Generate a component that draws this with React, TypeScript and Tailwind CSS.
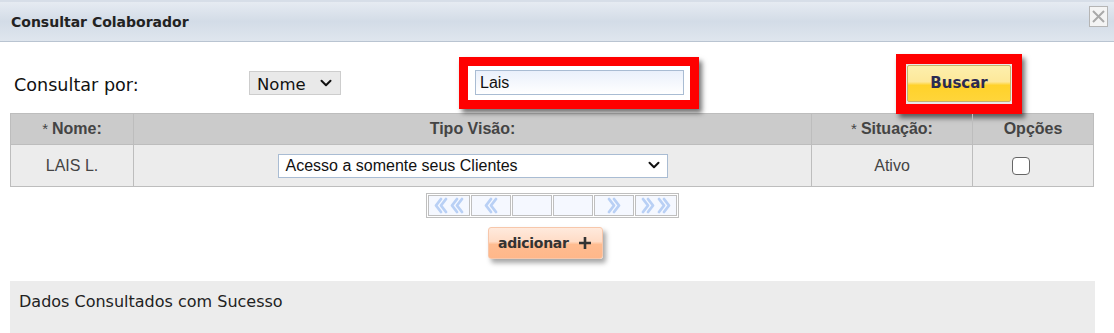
import React from "react";

const DChevL = () => (
  <svg width="14" height="17" viewBox="0 0 14 17" fill="none" stroke="#b9d0f5" strokeWidth="2.8" strokeLinecap="round" strokeLinejoin="round">
    <path d="M7 2 L2 8.5 L7 15" />
    <path d="M12 2 L7 8.5 L12 15" />
  </svg>
);
const DChevR = () => (
  <svg width="14" height="17" viewBox="0 0 14 17" fill="none" stroke="#b9d0f5" strokeWidth="2.8" strokeLinecap="round" strokeLinejoin="round">
    <path d="M2 2 L7 8.5 L2 15" />
    <path d="M7 2 L12 8.5 L7 15" />
  </svg>
);

const Chevron = ({ size = 12 }: { size?: number }) => (
  <svg width={size} height={size * 0.7} viewBox="0 0 12 8" fill="none" stroke="#111" strokeWidth="2" strokeLinecap="round" strokeLinejoin="round">
    <path d="M1.5 1.5 L6 6 L10.5 1.5" />
  </svg>
);

export default function App() {
  return (
    <div className="w-[1114px] h-[333px] bg-white overflow-hidden relative" style={{ fontFamily: "Arial, 'Liberation Sans', sans-serif" }}>
      {/* title bar */}
      <div className="h-[42px] border-t-[2px] border-t-[#d7dee8] border-b border-b-[#b9c4d1] bg-gradient-to-b from-[#e6ebf2] via-[#d3dce7] to-[#dfe6ee] flex items-center justify-between pl-[11px] pr-[6px]">
        <span className="mt-[2px] text-[14px] font-bold text-[#222] font-['DejaVu_Sans',sans-serif]">Consultar Colaborador</span>
        <div className="w-[19px] h-[21px] border border-[#b5b5b5] bg-[#f4f4f4] flex items-center justify-center -mt-[10px]">
          <svg width="15" height="15" viewBox="0 0 15 15" stroke="#a9a9a9" strokeWidth="2">
            <path d="M2 2 L13 13 M13 2 L2 13" />
          </svg>
        </div>
      </div>

      {/* search row */}
      <div className="h-[71px] pt-[12px] flex items-center">
        <span className="ml-[14px] mt-[3px] w-[235px] text-[17.6px] text-[#111] font-['DejaVu_Sans',sans-serif]">Consultar por:</span>
        <div className="w-[92px] h-[24px] bg-[#e9e9e9] border border-[#cdcdcd] flex items-center justify-between pl-[7px] pr-[8px] -mt-[1px]">
          <span className="text-[16.5px] text-[#111] font-['DejaVu_Sans',sans-serif] leading-none mt-[4px]">Nome</span>
          <Chevron size={12} />
        </div>
        <div className="ml-[118px] w-[240px] h-[52px] border-[9px] border-[#ff0000] shadow-[3px_4px_5px_rgba(0,0,0,0.55)] flex items-center pl-[7px] mt-[-2px]">
          <div className="w-[209px] h-[25px] border border-[#a9bcd3] bg-gradient-to-b from-[#eaf0fb] to-[#ffffff] flex items-center pl-[4px]">
            <span className="text-[16px] text-[#111]">Lais</span>
          </div>
        </div>
        <div className="ml-[197px] w-[126px] h-[60px] border-[10px] border-[#ff0000] shadow-[3px_4px_5px_rgba(0,0,0,0.55)] flex items-center bg-[#e8e8e8] p-[1px]">
          <div className="w-full h-[37px] rounded-[2px] border border-[#c8b26a] bg-[linear-gradient(to_bottom,#fdefad_0%,#fde89a_45%,#ffd22a_55%,#ffd53a_100%)] flex items-center justify-center">
            <span className="text-[15px] font-bold text-[#2b2b52] font-['DejaVu_Sans',sans-serif]">Buscar</span>
          </div>
        </div>
      </div>

      {/* table */}
      <div className="ml-[10px] w-[1084px] border border-[#bdbdbd]">
        <div className="flex h-[31px] bg-[#cbcbcb] border-b border-[#bdbdbd] text-[16px] text-[#444]">
          <div className="w-[123px] border-r border-[#bdbdbd] flex items-center justify-center"><span className="font-normal text-[15px] mr-[4px]">*</span><b>Nome:</b></div>
          <div className="w-[678px] border-r border-[#bdbdbd] flex items-center justify-center"><b>Tipo Visão:</b></div>
          <div className="w-[161px] border-r border-[#bdbdbd] flex items-center justify-center"><span className="font-normal text-[15px] mr-[4px]">*</span><b>Situação:</b></div>
          <div className="flex-1 flex items-center justify-center"><b>Opções</b></div>
        </div>
        <div className="flex h-[41px] bg-[#ececec] text-[16px] text-[#444]">
          <div className="w-[123px] border-r border-[#bdbdbd] flex items-center justify-center">LAIS L.</div>
          <div className="w-[678px] border-r border-[#bdbdbd] flex items-center justify-center">
            <div className="w-[390px] h-[24px] border border-[#a9bcd3] bg-white flex items-center justify-between pl-[7px] pr-[7px]">
              <span className="text-[16px] text-[#111]">Acesso a somente seus Clientes</span>
              <Chevron size={12} />
            </div>
          </div>
          <div className="w-[161px] border-r border-[#bdbdbd] flex items-center justify-center">Ativo</div>
          <div className="flex-1 flex items-center justify-center">
            <div className="ml-[-24px] w-[18px] h-[18px] rounded-[4px] border-[1.5px] border-[#666] bg-white" />
          </div>
        </div>
      </div>

      {/* pagination */}
      <div className="flex justify-center mt-[6px]">
        <div className="ml-[-10px] flex border border-[#bfbfbf] p-[1px] gap-[1px]">
          <div className="w-[42px] h-[21px] border border-[#bfbfbf] bg-[#f5f8ff] flex items-center justify-center gap-[2px]"><DChevL /><DChevL /></div>
          <div className="w-[40px] h-[21px] border border-[#bfbfbf] bg-[#f5f8ff] flex items-center justify-center"><DChevL /></div>
          <div className="w-[40px] h-[21px] border border-[#bfbfbf] bg-[#f5f8ff]" />
          <div className="w-[40px] h-[21px] border border-[#bfbfbf] bg-[#f5f8ff]" />
          <div className="w-[40px] h-[21px] border border-[#bfbfbf] bg-[#f5f8ff] flex items-center justify-center"><DChevR /></div>
          <div className="w-[42px] h-[21px] border border-[#bfbfbf] bg-[#f5f8ff] flex items-center justify-center gap-[2px]"><DChevR /><DChevR /></div>
        </div>
      </div>

      {/* adicionar */}
      <div className="flex justify-center mt-[9px]">
        <div className="ml-[-23px] w-[115px] h-[32px] rounded-[3px] border border-[#f7c7ab] bg-[linear-gradient(to_bottom,#ffeadd_0%,#ffdcc6_45%,#ffbc90_55%,#ffb78a_100%)] shadow-[3px_4px_5px_rgba(0,0,0,0.35)] flex items-center pl-[9px]">
          <span className="text-[14px] font-bold text-[#333] font-['DejaVu_Sans',sans-serif] tracking-[-0.3px]">adicionar</span>
          <svg className="ml-[9px]" width="14" height="14" viewBox="0 0 14 14" stroke="#333" strokeWidth="2.6">
            <path d="M7 1 V13 M1 7 H13" />
          </svg>
        </div>
      </div>

      {/* message */}
      <div className="ml-[10px] mt-[22px] w-[1085px] h-[60px] bg-[#ececec] pl-[9px] pt-[9px]">
        <span className="text-[16px] text-[#222] font-['DejaVu_Sans',sans-serif]">Dados Consultados com Sucesso</span>
      </div>
    </div>
  );
}
